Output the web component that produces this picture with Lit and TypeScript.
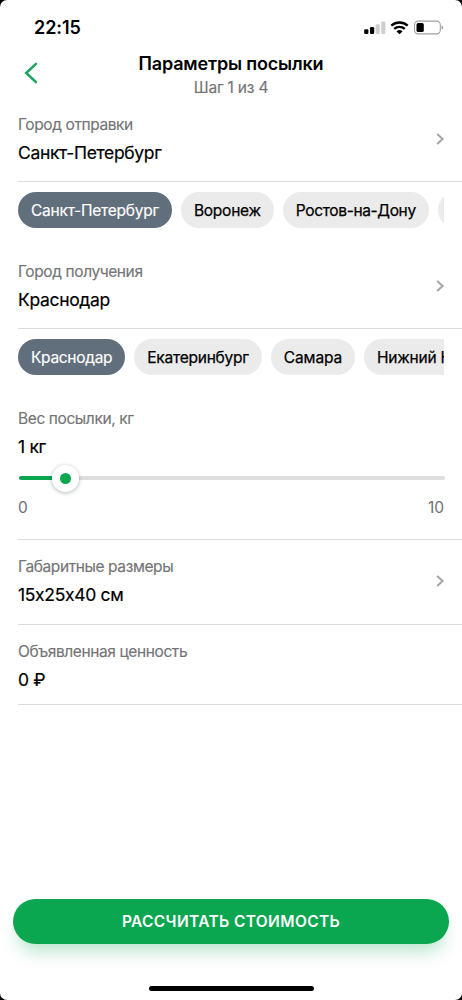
import { LitElement, html, css, svg, nothing } from "lit";
import { customElement, property, state } from "lit/decorators.js";
import { classMap } from "lit/directives/class-map.js";

interface City {
  name: string;
  tracking: number;
}

const ORIGINS: City[] = [
  { name: "Санкт-Петербург", tracking: -0.24 },
  { name: "Воронеж", tracking: -0.25 },
  { name: "Ростов-на-Дону", tracking: -0.36 },
  { name: "Москва", tracking: -0.2 },
];

const DESTINATIONS: City[] = [
  { name: "Краснодар", tracking: -0.31 },
  { name: "Екатеринбург", tracking: -0.23 },
  { name: "Самара", tracking: -0.14 },
  { name: "Нижний Новгород", tracking: -0.24 },
];

@customElement("status-bar")
class StatusBar extends LitElement {
  static styles = css`
    :host {
      display: flex;
      justify-content: space-between;
      height: 50px;
      padding: 0 19px 0 34px;
      box-sizing: border-box;
    }
    .time {
      font-size: 18px;
      font-weight: 600;
      line-height: 22px;
      margin-top: 17px;
      letter-spacing: -0.05px;
    }
    .icons {
      width: 80px;
      height: 16px;
      margin-top: 20px;
    }
  `;
  render() {
    return html`
      <span class="time">22:15</span>
      <svg class="icons" viewBox="0 0 80 16">
        <rect x="1.2" y="9.2" width="4.2" height="4.8" rx="1.2" />
        <rect x="7" y="7" width="4.2" height="7" rx="1.2" />
        <g fill="#cfcfcf">
          <rect x="12.6" y="4.2" width="4.2" height="9.8" rx="1.2" />
          <rect x="18.2" y="1.4" width="4.2" height="12.6" rx="1.2" />
        </g>
        <g fill="none" stroke="#000" stroke-width="2.3">
          <path d="M28.3 5.6A12.4 12.4 0 0 1 44.7 5.6" />
          <path d="M31.2 8.9A8 8 0 0 1 41.8 8.9" />
        </g>
        <path d="M36.5 14.3L33.5 11.4A4.4 4.4 0 0 1 39.5 11.4Z" />
        <rect x="51.5" y="1.1" width="25.8" height="12.8" rx="3.8" fill="none" stroke="#a0a0a0" stroke-width="1.1" />
        <rect x="53.5" y="3.1" width="7.3" height="9" rx="1.6" />
        <path d="M78.6 5.4Q80 5.9 80 7.5T78.6 9.6Z" fill="#888" />
      </svg>
    `;
  }
}

@customElement("field-row")
class FieldRow extends LitElement {
  @property() label = "";
  @property() value = "";
  @property({ type: Boolean }) arrow = false;
  static styles = css`
    :host {
      display: flex;
      justify-content: space-between;
      align-items: center;
      padding-right: 17px;
    }
    .label {
      font-size: 15.5px;
      line-height: 20px;
      letter-spacing: -0.4px;
      color: #747476;
      -webkit-text-stroke: 0.15px #747476;
    }
    .value {
      margin-top: 7px;
      font-size: 17.5px;
      line-height: 22px;
      letter-spacing: -0.33px;
      -webkit-text-stroke: 0.2px #000;
    }
    .arrow {
      width: 10px;
      height: 14px;
      margin-bottom: 2px;
    }
  `;
  render() {
    return html`
      <div>
        <div class="label">${this.label}</div>
        <div class="value">${this.value}</div>
      </div>
      ${this.arrow
        ? html`<svg class="arrow" viewBox="0 0 10 14">
            ${svg`<path d="M2.2 2L7.6 7L2.2 12" fill="none" stroke="#a6a6a6" stroke-width="2.1" />`}
          </svg>`
        : nothing}
    `;
  }
}

@customElement("city-chips")
class CityChips extends LitElement {
  @property({ attribute: false }) cities: City[] = [];
  @state() private selected = 0;
  static styles = css`
    :host {
      display: flex;
      gap: 9px;
      margin-right: 18px;
      overflow: hidden;
    }
    .chip {
      flex: none;
      height: 36px;
      padding: 1px 13px 0;
      border: 0;
      border-radius: 18px;
      background: #ebebeb;
      color: #000;
      font: 400 15.5px/35px Inter, sans-serif;
      -webkit-text-stroke: 0.25px #000;
      white-space: nowrap;
    }
    .selected {
      background: #616f7c;
      color: #fff;
      -webkit-text-stroke: 0.15px #fff;
    }
  `;
  render() {
    return this.cities.map(
      (city, i) => html`<button
        class=${classMap({ chip: true, selected: i === this.selected })}
        style="letter-spacing:${city.tracking}px"
        @click=${() => (this.selected = i)}
      >${city.name}</button>`
    );
  }
}

@customElement("weight-slider")
class WeightSlider extends LitElement {
  @property({ type: Number }) value = 1;
  @property({ type: Number }) max = 10;
  static styles = css`
    :host {
      display: block;
      margin: 0 17px 0 1px;
    }
    .track {
      display: flex;
      align-items: center;
      height: 28px;
    }
    .fill {
      height: 4px;
      border-radius: 2px 0 0 2px;
      background: #0aa650;
    }
    .thumb {
      flex: none;
      display: grid;
      place-items: center;
      width: 27px;
      height: 27px;
      border-radius: 50%;
      background: #fff;
      box-shadow: 0 1px 4px rgba(40, 60, 70, 0.36);
      z-index: 1;
    }
    .dot {
      width: 11px;
      height: 11px;
      border-radius: 50%;
      background: #0aa650;
    }
    .rest {
      flex: 1;
      height: 4px;
      border-radius: 0 2px 2px 0;
      background: #dedede;
    }
    .scale {
      display: flex;
      justify-content: space-between;
      margin: 6px 1px 0 -1px;
      font-size: 15.5px;
      line-height: 20px;
      color: #6e6e71;
    }
  `;
  render() {
    return html`
      <div class="track">
        <div class="fill" style="width:${(this.value / this.max) * 78}%"></div>
        <div class="thumb"><div class="dot"></div></div>
        <div class="rest"></div>
      </div>
      <div class="scale"><span>0</span><span>${this.max}</span></div>
    `;
  }
}

@customElement("app-root")
class AppRoot extends LitElement {
  static styles = css`
    :host {
      display: block;
      height: 1000px;
      background: #000;
      font-family: Inter, sans-serif;
      color: #000;
    }
    .screen {
      display: flex;
      flex-direction: column;
      height: 1000px;
      border-radius: 7px;
      background: #fff;
      overflow: hidden;
    }
    .header {
      display: grid;
      grid-template-columns: 60px 1fr 60px;
      height: 64px;
    }
    .back {
      width: 14px;
      height: 22px;
      margin: 12px 0 0 24px;
    }
    .titles {
      text-align: center;
    }
    .title {
      margin-top: 2px;
      font-size: 18px;
      line-height: 24px;
      font-weight: 600;
      letter-spacing: -0.18px;
    }
    .step {
      font-size: 15.5px;
      line-height: 20px;
      margin-top: 2px;
      letter-spacing: -0.2px;
      color: #747476;
      -webkit-text-stroke: 0.15px #747476;
    }
    .form {
      flex: 1;
      padding-left: 18px;
    }
    .section {
      box-sizing: border-box;
      border-bottom: 1px solid #dcdcdc;
    }
    .from {
      height: 68px;
      padding-top: 1px;
    }
    .chips {
      height: 80px;
      padding-top: 10px;
      box-sizing: border-box;
    }
    .to {
      height: 67px;
    }
    .weight {
      height: 131px;
    }
    .size {
      height: 85px;
      padding-top: 17px;
    }
    .cost {
      height: 80px;
      padding-top: 17px;
    }
    .slider {
      margin-top: 6px;
    }
    .submit {
      height: 45px;
      margin: 0 13px;
      padding: 1px 0 0;
      border: 0;
      border-radius: 23px;
      background: #0aa650;
      color: #fff;
      font: 600 15.5px/44px Inter, sans-serif;
      letter-spacing: 0.36px;
      box-shadow: 0 12px 18px -5px rgba(10, 166, 80, 0.3);
    }
    .home {
      align-self: center;
      width: 165px;
      height: 5px;
      margin: 42px 0 9px;
      border-radius: 3px;
      background: #000;
    }
  `;
  render() {
    return html`
      <div class="screen">
        <status-bar></status-bar>
        <div class="header">
          <svg class="back" viewBox="0 0 14 22">
            <path d="M12 1.8L2.2 11L12 20.2" fill="none" stroke="#1ba45c" stroke-width="2.5" stroke-linecap="round" />
          </svg>
          <div class="titles">
            <div class="title">Параметры посылки</div>
            <div class="step">Шаг 1 из 4</div>
          </div>
        </div>
        <div class="form">
          <div class="section from">
            <field-row label="Город отправки" value="Санкт-Петербург" arrow></field-row>
          </div>
          <div class="chips">
            <city-chips .cities=${ORIGINS}></city-chips>
          </div>
          <div class="section to">
            <field-row label="Город получения" value="Краснодар" arrow></field-row>
          </div>
          <div class="chips">
            <city-chips .cities=${DESTINATIONS}></city-chips>
          </div>
          <div class="section weight">
            <field-row label="Вес посылки, кг" value="1 кг"></field-row>
            <div class="slider"><weight-slider value="1" max="10"></weight-slider></div>
          </div>
          <div class="section size">
            <field-row label="Габаритные размеры" value="15x25x40 см" arrow></field-row>
          </div>
          <div class="section cost">
            <field-row label="Объявленная ценность" value="0 ₽"></field-row>
          </div>
        </div>
        <button class="submit">РАССЧИТАТЬ СТОИМОСТЬ</button>
        <div class="home"></div>
      </div>
    `;
  }
}
